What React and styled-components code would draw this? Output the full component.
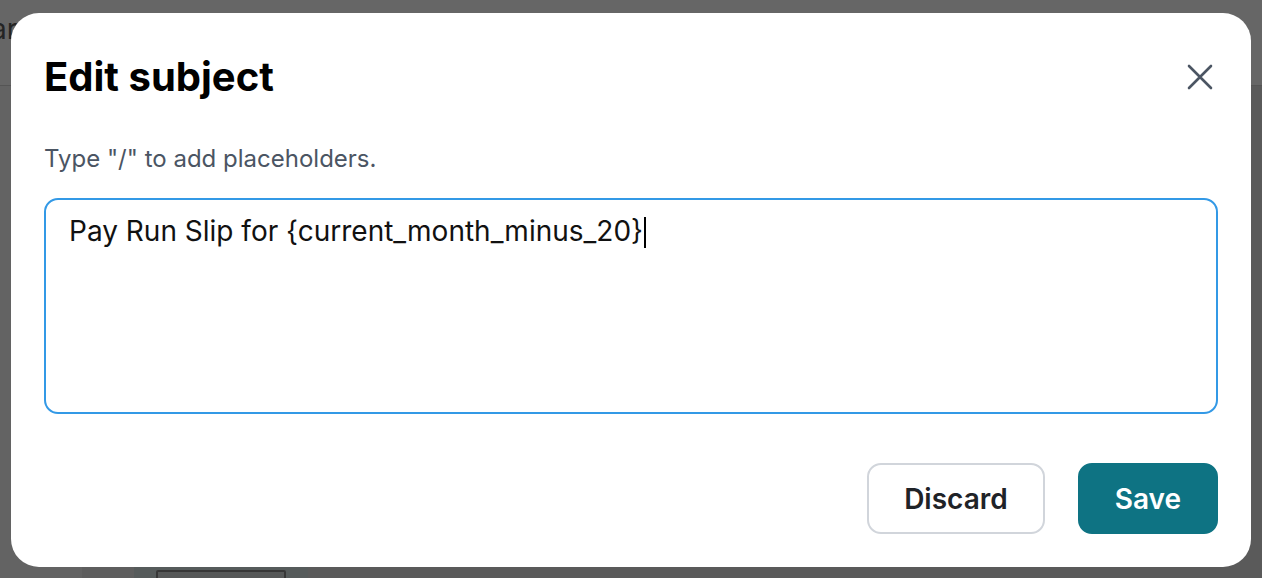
import React from 'react'
import styled, { createGlobalStyle } from 'styled-components'

const GlobalStyle = createGlobalStyle`
  html, body {
    margin: 0;
    padding: 0;
    height: 100%;
    background: #ffffff;
    font-family: Inter, "Noto Sans", "Liberation Sans", sans-serif;
  }
  * { box-sizing: border-box; }
`

// the page that sits behind the dimmed overlay
const Page = styled.div`
  width: 100vw;
  height: 100vh;
  display: flex;
  flex-direction: column;
  overflow: hidden;
`

const PageHeader = styled.header`
  height: 86px;
  flex-shrink: 0;
  display: flex;
  align-items: flex-start;
  padding-top: 12px;
  border-bottom: 1px solid #d4d4d4;
  font-size: 28px;
  line-height: 34px;
  color: #5a5a5a;
`

const PageTitle = styled.span`
  margin-left: -9px;
`

const PageBody = styled.div`
  flex: 1;
  display: flex;
  background: #f7f7f7;
`

const Gutter = styled.div`
  width: ${p => p.w}px;
  flex-shrink: 0;
  background: ${p => p.bg};
  display: flex;
  align-items: flex-end;
  justify-content: center;
`

const GhostButton = styled.div`
  width: 130px;
  height: 16px;
  margin-bottom: -8px;
  border: 2px solid #8a8a8a;
  border-radius: 2px;
  background: #d8dcdc;
`

const Overlay = styled.div`
  position: fixed;
  inset: 0;
  padding-top: 2px;
  background: rgba(0, 0, 0, 0.6);
  display: flex;
  align-items: center;
  justify-content: center;
`

const Modal = styled.div`
  width: 1240px;
  height: 554px;
  background: #ffffff;
  border-radius: 28px;
  padding: 40px 33px 33px;
  display: flex;
  flex-direction: column;
`

const Header = styled.div`
  display: flex;
  align-items: center;
  justify-content: space-between;
`

const Title = styled.h2`
  margin: 0;
  font-size: 40px;
  line-height: 48px;
  font-weight: 700;
  color: #000;
`

const CloseButton = styled.button`
  border: none;
  background: transparent;
  padding: 0;
  margin-right: 5px;
  width: 26px;
  height: 26px;
  display: flex;
  align-items: center;
  justify-content: center;
  cursor: pointer;
`

const Hint = styled.p`
  margin: 42px 0 0;
  font-size: 24px;
  line-height: 32px;
  color: #4b5563;
`

const Field = styled.div`
  margin-top: 23px;
  height: 216px;
  border: 2px solid #3399e6;
  border-radius: 14px;
  padding: 13px 23px;
  font-size: 28px;
  line-height: 36px;
  color: #111;
`

const Caret = styled.span`
  display: inline-block;
  width: 2px;
  height: 31px;
  background: #000;
  vertical-align: -7px;
  margin-left: 1px;
`

const Footer = styled.div`
  margin-top: auto;
  display: flex;
  justify-content: flex-end;
  gap: 33px;
`

const Button = styled.button`
  height: 71px;
  padding: 0 35px;
  border-radius: 14px;
  border: 2px solid ${p => (p.primary ? '#0e7383' : '#d1d5db')};
  background: ${p => (p.primary ? '#0e7383' : '#ffffff')};
  color: ${p => (p.primary ? '#ffffff' : '#1f2328')};
  font-family: inherit;
  font-size: 28px;
  font-weight: 600;
  cursor: pointer;
`

const CloseIcon = () => (
  <svg width="26" height="26" viewBox="0 0 26 26" fill="none">
    <path d="M2 2L24 24M24 2L2 24" stroke="#4b5563" strokeWidth="2.6" strokeLinecap="round" />
  </svg>
)

const App = () => {
  return (
    <>
      <GlobalStyle />
      <Page>
        <PageHeader>
          <PageTitle>ar</PageTitle>
        </PageHeader>
        <PageBody>
          <Gutter w={82} bg="#f8f8f8" />
          <Gutter w={52} bg="#ececec" />
          <Gutter w={174} bg="#d6e3e3">
            <GhostButton />
          </Gutter>
          <Gutter w={954} bg="#e2e2e2" />
        </PageBody>
      </Page>

      <Overlay>
        <Modal role="dialog" aria-labelledby="edit-subject-title">
          <Header>
            <Title id="edit-subject-title">Edit subject</Title>
            <CloseButton aria-label="Close">
              <CloseIcon />
            </CloseButton>
          </Header>
          <Hint>Type "/" to add placeholders.</Hint>
          <Field>
            Pay Run Slip for {'{current_month_minus_20}'}
            <Caret />
          </Field>
          <Footer>
            <Button>Discard</Button>
            <Button primary>Save</Button>
          </Footer>
        </Modal>
      </Overlay>
    </>
  )
}

export default App
